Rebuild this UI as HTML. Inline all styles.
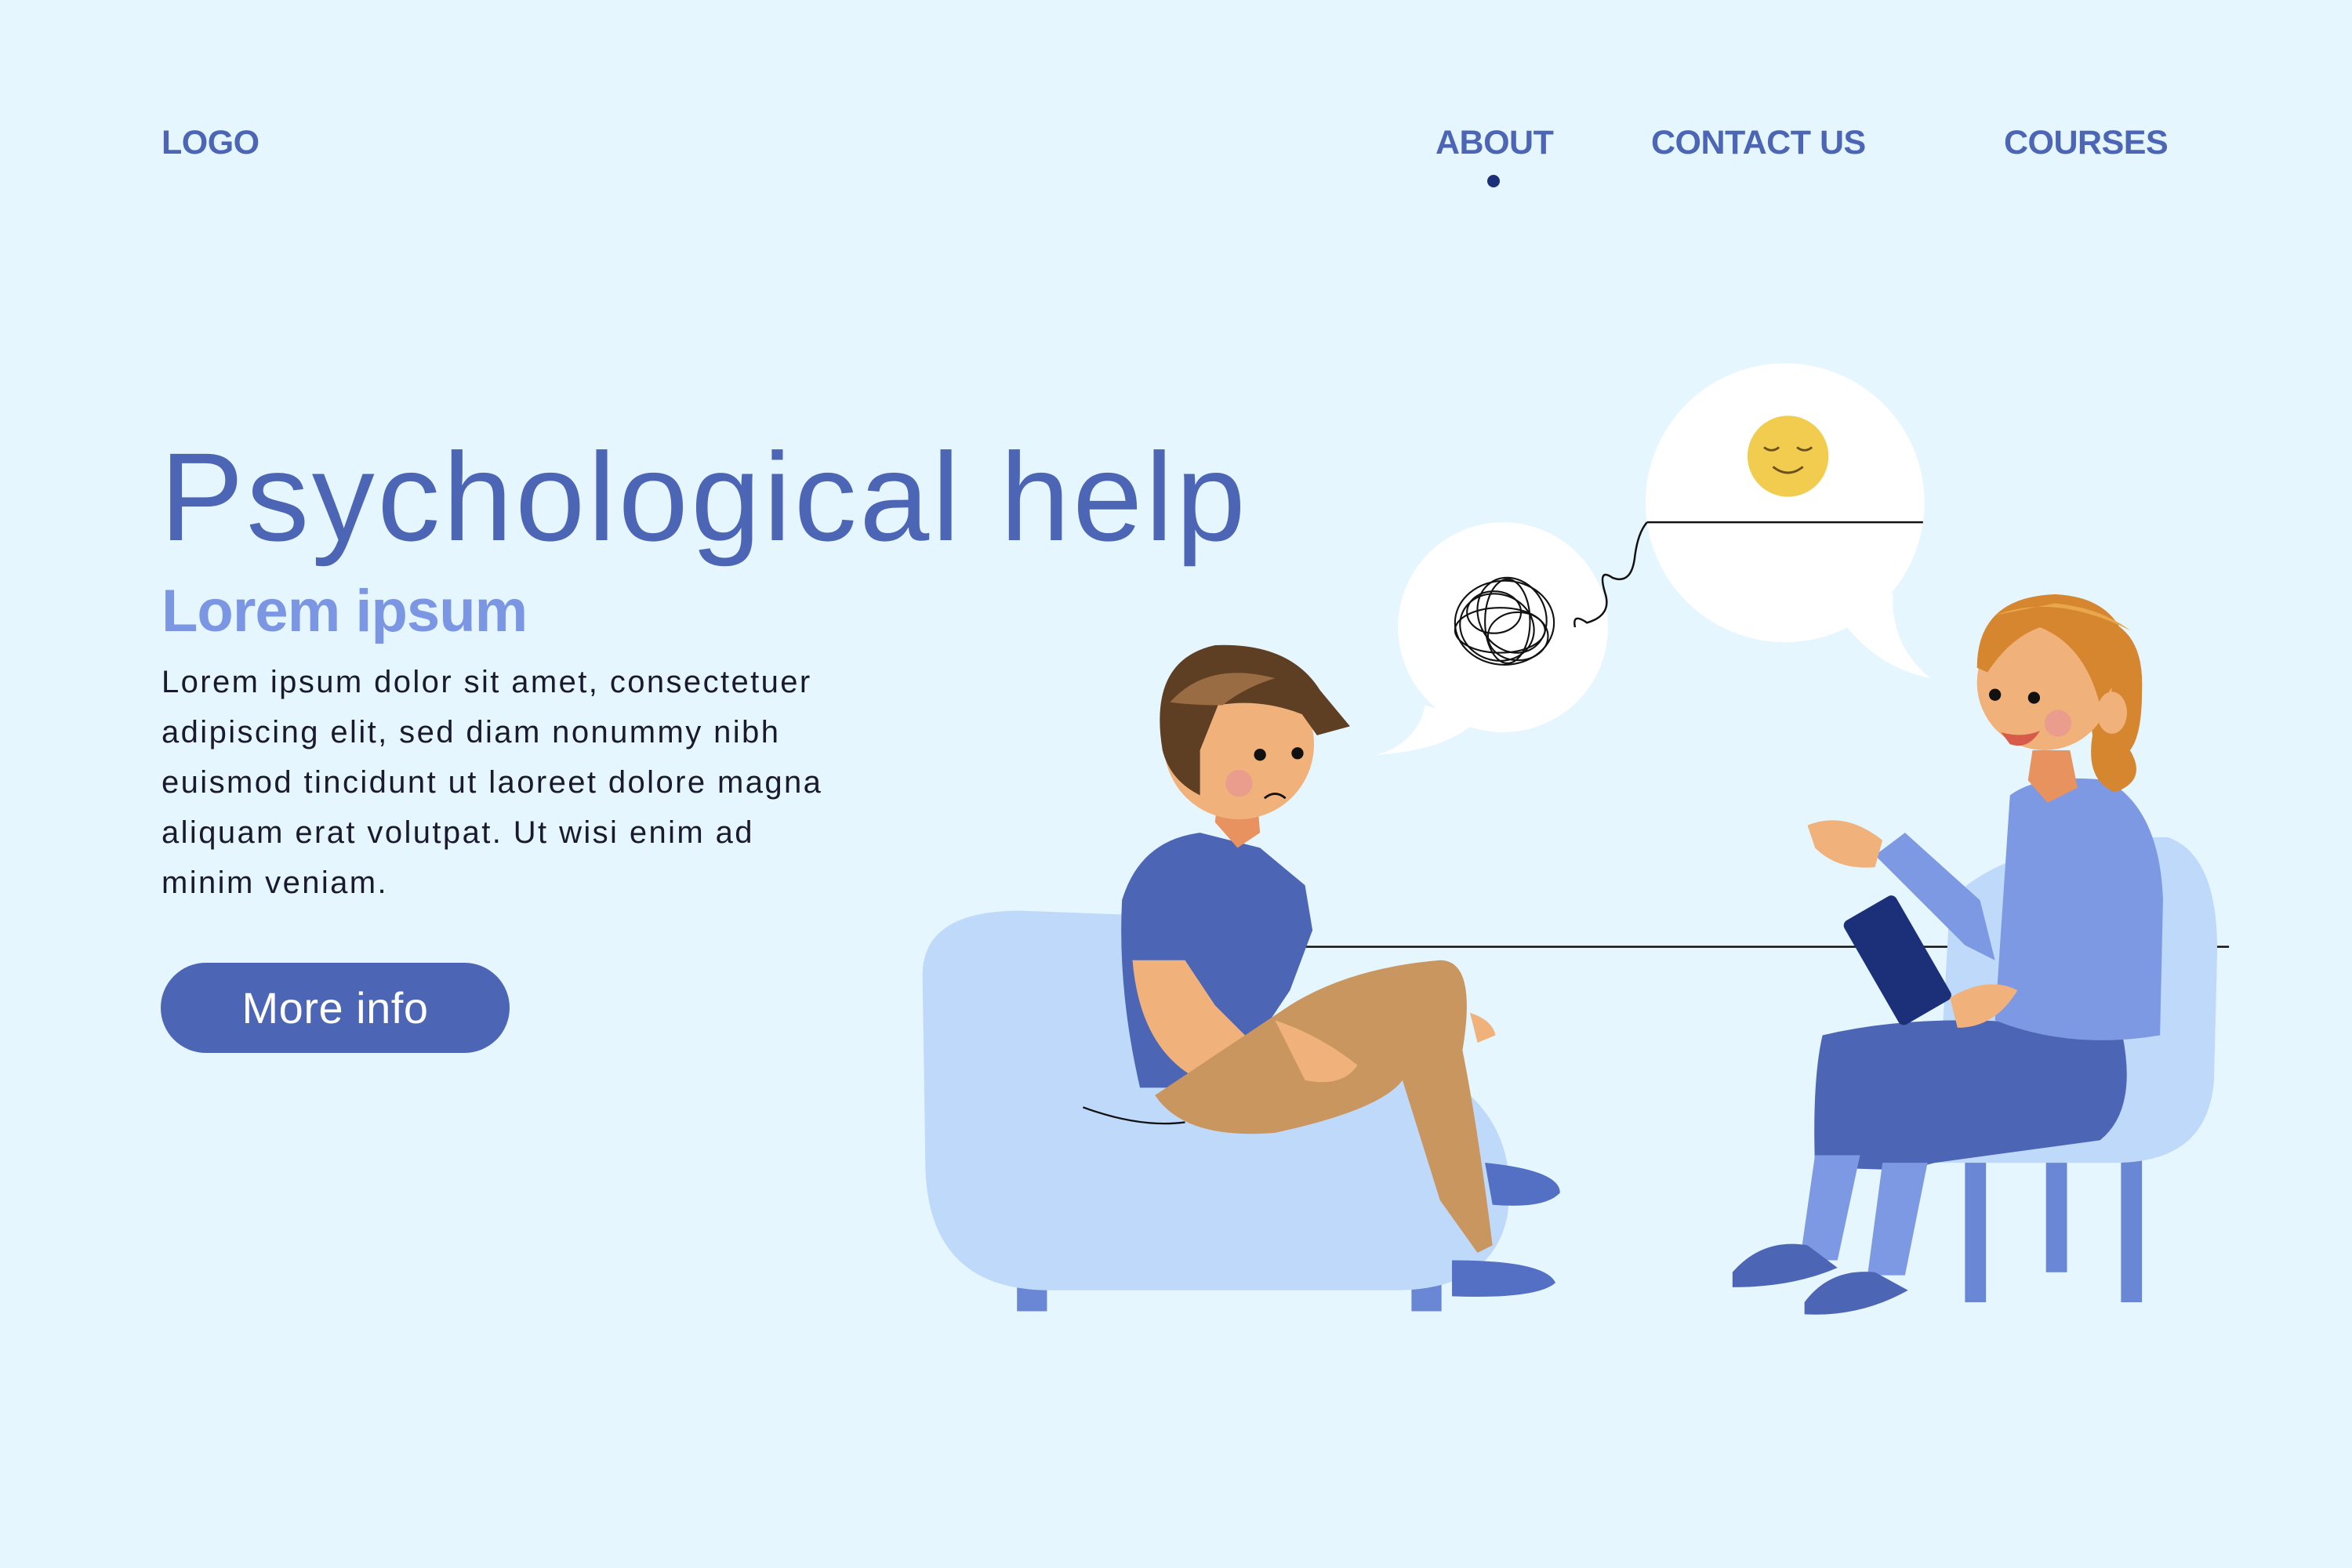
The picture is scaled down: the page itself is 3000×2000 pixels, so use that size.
<!DOCTYPE html>
<html><head><meta charset="utf-8"><style>
html,body{margin:0;padding:0;}
body{width:3000px;height:2000px;background:#e5f6fe;position:relative;overflow:hidden;font-family:"Liberation Sans",sans-serif;}
.nav{position:absolute;top:158px;font-weight:bold;font-size:43px;color:#4c66b5;letter-spacing:-0.5px;}
#h1{position:absolute;left:204px;top:542px;font-size:160px;color:#4c66b5;margin:0;font-weight:normal;letter-spacing:3.5px;white-space:nowrap;}
#h2{position:absolute;left:206px;top:736px;font-size:76px;color:#7b96e2;font-weight:bold;letter-spacing:-1px;}
#p{position:absolute;left:206px;top:838px;font-size:40px;line-height:64px;color:#1a1a2e;width:1200px;letter-spacing:2.4px;}
#btn{position:absolute;left:205px;top:1228px;width:445px;height:115px;border-radius:58px;background:#4c66b5;color:#fff;font-size:56px;text-align:center;line-height:115px;letter-spacing:0.5px;}
svg{position:absolute;left:0;top:0;}
</style></head><body>
<div class="nav" style="left:206px">LOGO</div>
<div class="nav" style="left:1831px">ABOUT</div>
<div style="position:absolute;left:1897px;top:223px;width:16px;height:16px;border-radius:50%;background:#1c307a"></div>
<div class="nav" style="left:2106px">CONTACT US</div>
<div class="nav" style="left:2556px">COURSES</div>
<div id="h1">Psychological help</div>
<div id="h2">Lorem ipsum</div>
<div id="p">Lorem ipsum dolor sit amet, consectetuer<br>adipiscing elit, sed diam nonummy nibh<br>euismod tincidunt ut laoreet dolore magna<br>aliquam erat volutpat. Ut wisi enim ad<br>minim veniam.</div>
<div id="btn">More info</div>
<svg width="3000" height="2000" viewBox="0 0 1568 1045">
<circle cx="1002" cy="418" r="70" fill="#fff"/>
<path d="M950,470 Q945,495 918,503 Q965,500 985,480 Z" fill="#fff"/>
<circle cx="1190" cy="335" r="93" fill="#fff"/>
<path d="M1225,410 Q1250,445 1287,452 Q1260,430 1262,395 Z" fill="#fff"/>
<circle cx="1192" cy="304" r="27" fill="#f2cc4e"/>
<path d="M1176,298 q5,4 10,0 M1198,298 q5,4 10,0 M1182,311 q10,8 20,0" stroke="#6b5020" stroke-width="1.5" fill="none"/>
<path d="M1098,348 H1282 M1098,348 Q1092,355 1090,370 Q1088,390 1075,385 Q1065,378 1070,395 Q1075,410 1058,415 Q1048,408 1050,418" stroke="#111" stroke-width="1.3" fill="none"/>
<g stroke="#111" stroke-width="1.1" fill="none">
<ellipse cx="1003" cy="415" rx="33" ry="28"/><ellipse cx="998" cy="418" rx="25" ry="22" transform="rotate(20 998 418)"/>
<ellipse cx="1008" cy="410" rx="22" ry="26" transform="rotate(-30 1008 410)"/><ellipse cx="1000" cy="420" rx="30" ry="15"/>
<ellipse cx="1005" cy="414" rx="15" ry="28"/><ellipse cx="996" cy="408" rx="18" ry="14"/><ellipse cx="1012" cy="424" rx="20" ry="16"/>
</g>
<line x1="860" y1="631" x2="1486" y2="631" stroke="#111" stroke-width="1.3"/>
<rect x="678" y="830" width="20" height="44" fill="#6a87d6"/><rect x="941" y="830" width="20" height="44" fill="#6a87d6"/>
<path d="M615,650 Q615,607 680,607 L760,610 L770,720 Q900,700 980,730 Q1012,760 1005,810 Q995,860 930,860 L700,860 Q620,860 617,780 Z" fill="#bfd9fb"/>
<path d="M722,738 Q760,752 790,748" stroke="#111" stroke-width="1.2" fill="none"/>
<rect x="1310" y="760" width="14" height="108" fill="#6a87d6"/><rect x="1364" y="760" width="14" height="88" fill="#6a87d6"/><rect x="1414" y="760" width="14" height="108" fill="#6a87d6"/>
<path d="M1300,600 Q1340,558 1445,558 Q1480,570 1478,640 L1476,720 Q1472,775 1410,775 L1290,775 Z" fill="#bfd9fb"/>
<path d="M748,600 Q760,560 800,555 L840,565 L870,590 L875,620 L860,660 L840,690 L820,725 L760,725 Q745,660 748,600 Z" fill="#4c66b5"/>
<path d="M755,640 Q760,700 800,720 L840,700 L810,670 L790,640 Z" fill="#f0b27a"/>
<path d="M770,730 Q790,760 850,755 Q920,740 935,720 L960,800 L985,835 L995,830 Q985,750 975,700 Q985,640 960,640 Q900,645 860,670 L800,710 Z" fill="#c99660"/>
<path d="M850,680 Q880,690 905,710 Q895,725 870,720 Z" fill="#f0b27a"/>
<path d="M980,675 Q995,680 997,690 L985,695 Z" fill="#f0b27a"/>
<path d="M990,775 Q1040,780 1040,795 Q1030,806 995,803 Z" fill="#5470c4"/>
<path d="M968,840 Q1030,840 1037,855 Q1025,866 968,864 Z" fill="#5470c4"/>
<path d="M812,530 L838,530 L840,555 L825,565 L810,548 Z" fill="#e8925f"/>
<circle cx="826" cy="496" r="50" fill="#f0b27a"/>
<ellipse cx="795" cy="512" rx="12" ry="15" fill="#f0b27a"/>
<path d="M775,500 Q765,440 810,430 Q860,428 880,460 L900,484 L878,490 L868,476 Q840,465 812,470 L800,500 L800,530 Q780,520 775,500 Z" fill="#5e3f23"/>
<path d="M780,468 Q805,440 850,452 Q830,458 815,470 Q795,470 780,468 Z" fill="#9a6c43"/>
<circle cx="840" cy="503" r="4" fill="#111"/><circle cx="865" cy="502" r="4" fill="#111"/>
<path d="M843,532 q7,-6 14,0" stroke="#111" stroke-width="1.5" fill="none"/>
<circle cx="826" cy="522" r="9" fill="#e8909a" opacity=".6"/>
<path d="M1215,690 Q1300,670 1415,690 Q1425,740 1400,760 L1290,775 L1270,780 L1210,778 Q1208,720 1215,690 Z" fill="#4c66b5"/>
<path d="M1210,770 L1240,770 L1225,840 L1200,840 Z" fill="#7e99e3"/>
<path d="M1255,775 L1285,775 L1270,850 L1245,850 Z" fill="#7e99e3"/>
<path d="M1155,848 Q1175,825 1205,830 L1225,845 Q1195,858 1155,858 Z" fill="#4c66b5"/>
<path d="M1203,868 Q1220,845 1250,848 L1272,860 Q1240,878 1203,876 Z" fill="#4c66b5"/>
<path d="M1340,530 Q1360,515 1405,520 Q1440,540 1442,600 L1440,690 Q1380,700 1330,680 Z" fill="#7e99e3"/>
<path d="M1250,570 L1270,555 L1320,600 L1330,640 L1310,630 Z" fill="#7e99e3"/>
<path d="M1205,550 Q1230,540 1255,560 L1250,578 Q1225,580 1210,565 Z" fill="#f0b27a"/>
<rect x="1245" y="600" width="40" height="80" rx="4" fill="#1c307a" transform="rotate(-30 1265 640)"/>
<path d="M1300,665 Q1325,650 1345,660 Q1330,685 1305,685 Z" fill="#f0b27a"/>
<path d="M1400,600 L1440,620 L1440,670 L1380,685 L1345,665 Z" fill="#7e99e3"/>
<path d="M1355,500 L1380,500 L1385,525 L1365,535 L1352,520 Z" fill="#e8925f"/>
<path d="M1385,410 Q1430,410 1428,460 Q1428,490 1420,500 Q1432,520 1410,528 Q1390,520 1395,490 Z" fill="#d6862f"/>
<circle cx="1363" cy="455" r="45" fill="#f0b27a"/>
<path d="M1318,445 Q1318,398 1370,396 Q1415,398 1420,440 L1400,470 Q1390,430 1360,418 Q1340,425 1325,448 Z" fill="#d6862f"/>
<path d="M1330,410 Q1370,395 1420,420 Q1400,405 1370,402 Z" fill="#e8a74a"/>
<ellipse cx="1408" cy="475" rx="10" ry="14" fill="#f0b27a"/>
<circle cx="1330" cy="463" r="4" fill="#111"/><circle cx="1356" cy="465" r="4" fill="#111"/>
<path d="M1334,488 Q1348,492 1360,487 Q1352,500 1340,496 Z" fill="#d85b4a"/>
<circle cx="1372" cy="482" r="9" fill="#e8909a" opacity=".6"/>
</svg>
</body></html>
